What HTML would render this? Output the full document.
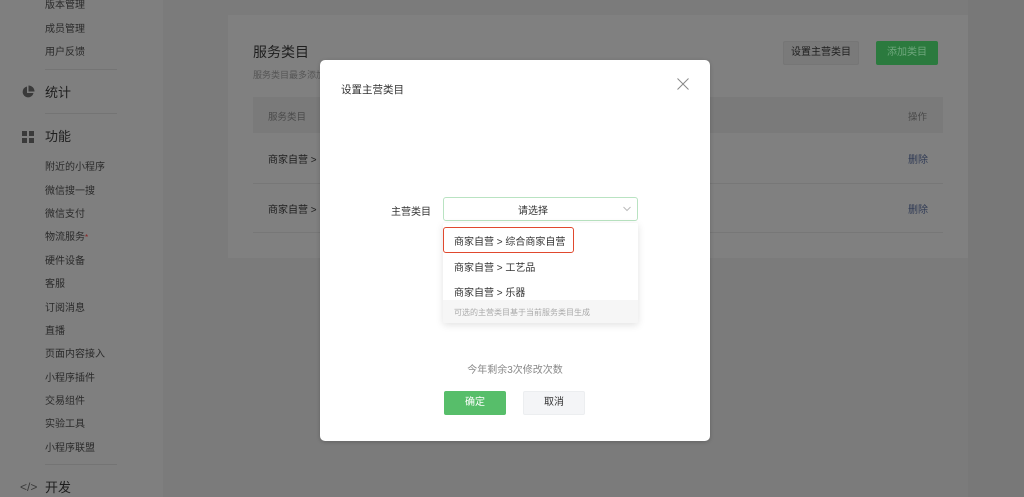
<!DOCTYPE html>
<html><head><meta charset="utf-8"><style>
*{margin:0;padding:0;box-sizing:border-box}
body{width:1024px;height:497px;overflow:hidden;position:relative;background:#7b7b7b;font-family:"Liberation Sans","Noto Sans CJK SC",sans-serif}
.a{position:absolute;white-space:nowrap}
.sb{left:0;top:0;width:163px;height:497px;background:#7f7f7f}
.si{left:45px;font-size:10px;color:#2a2a2a;line-height:12px}
.hr{height:1px;background:#747474;left:45px;width:72px}
.big{left:45px;font-size:13px;color:#1e1e1e;line-height:16px}
</style></head><body>
<div class="a sb"></div>
<div class="a si" style="top:0">版本管理</div>
<div class="a si" style="top:24px">成员管理</div>
<div class="a si" style="top:47px">用户反馈</div>
<div class="a hr" style="top:69px"></div>
<svg class="a" style="left:21px;top:85px" width="14" height="14" viewBox="0 0 14 14"><path d="M6 1.5A5.5 5.5 0 1 0 12.5 8H6Z" fill="#3a3a3a"/><path d="M7.5 0.5V6.5H13.5A6 6 0 0 0 7.5 0.5Z" fill="#3a3a3a"/></svg>
<div class="a big" style="top:85px">统计</div>
<div class="a hr" style="top:113px"></div>
<svg class="a" style="left:22px;top:131px" width="12" height="12"><rect x="0" y="0" width="5" height="5" fill="#3a3a3a"/><rect x="7" y="0" width="5" height="5" fill="#3a3a3a"/><rect x="0" y="7" width="5" height="5" fill="#3a3a3a"/><rect x="7" y="7" width="5" height="5" fill="#3a3a3a"/></svg>
<div class="a big" style="top:129px">功能</div>
<div class="a si" style="top:162px">附近的小程序</div>
<div class="a si" style="top:186px">微信搜一搜</div>
<div class="a si" style="top:209px">微信支付</div>
<div class="a si" style="top:232px">物流服务<span style="color:#8a1e1e;font-size:8px;vertical-align:top">*</span></div>
<div class="a si" style="top:256px">硬件设备</div>
<div class="a si" style="top:279px">客服</div>
<div class="a si" style="top:303px">订阅消息</div>
<div class="a si" style="top:326px">直播</div>
<div class="a si" style="top:349px">页面内容接入</div>
<div class="a si" style="top:373px">小程序插件</div>
<div class="a si" style="top:396px">交易组件</div>
<div class="a si" style="top:419px">实验工具</div>
<div class="a si" style="top:443px">小程序联盟</div>
<div class="a hr" style="top:464px"></div>
<div class="a" style="left:20px;top:480px;font-size:12px;color:#3a3a3a">&lt;/&gt;</div>
<div class="a big" style="top:480px">开发</div>

<div class="a" style="left:968px;top:0;width:56px;height:497px;background:#787878"></div>
<div class="a" style="left:228px;top:15px;width:740px;height:243px;background:#808080"></div>
<div class="a" style="left:253px;top:42px;font-size:14px;color:#1e1e1e">服务类目</div>
<div class="a" style="left:253px;top:68px;font-size:9px;color:#555">服务类目最多添加</div>
<div class="a" style="left:253px;top:97px;width:690px;height:36px;background:#7a7a7a"></div>
<div class="a" style="left:268px;top:109px;font-size:9.5px;color:#4a4a4a">服务类目</div>
<div class="a" style="left:908px;top:109px;font-size:9.5px;color:#4a4a4a">操作</div>
<div class="a" style="left:268px;top:151px;font-size:10px;color:#1e1e1e">商家自营 &gt;</div>
<div class="a" style="left:908px;top:151px;font-size:10px;color:#2f3a55">删除</div>
<div class="a" style="left:253px;top:183px;width:690px;height:1px;background:#777"></div>
<div class="a" style="left:268px;top:201px;font-size:10px;color:#1e1e1e">商家自营 &gt;</div>
<div class="a" style="left:908px;top:201px;font-size:10px;color:#2f3a55">删除</div>
<div class="a" style="left:253px;top:232px;width:690px;height:1px;background:#777"></div>
<div class="a" style="left:783px;top:41px;width:76px;height:24px;background:#7a7a7a;border:1px solid #767676;border-radius:2px;font-size:10px;color:#1e1e1e;text-align:center;line-height:22px">设置主营类目</div>
<div class="a" style="left:876px;top:41px;width:62px;height:24px;background:#2b7a3e;border-radius:2px;font-size:10px;color:#6fa77d;text-align:center;line-height:24px">添加类目</div>

<div class="a" style="left:320px;top:60px;width:390px;height:381px;background:#fff;border-radius:5px;box-shadow:0 1px 4px rgba(0,0,0,.2)"></div>
<div class="a" style="left:341px;top:82px;font-size:10.5px;color:#333">设置主营类目</div>
<svg class="a" style="left:677px;top:78px" width="12" height="12"><path d="M0.5 0.5L11.5 11.5M11.5 0.5L0.5 11.5" stroke="#888" stroke-width="1"/></svg>
<div class="a" style="left:391px;top:203px;font-size:10px;color:#333">主营类目</div>
<div class="a" style="left:443px;top:197px;width:195px;height:24px;border:1px solid #b9e3c2;border-radius:3px;background:#fff"></div>
<div class="a" style="left:443px;top:202px;width:180px;text-align:center;font-size:10px;color:#333">请选择</div>
<svg class="a" style="left:623px;top:206px" width="8" height="6"><path d="M0.5 1L4 4.5L7.5 1" stroke="#bbb" fill="none"/></svg>
<div class="a" style="left:443px;top:223px;width:195px;height:100px;background:#fff;box-shadow:0 2px 8px rgba(0,0,0,.12);border-radius:2px;overflow:hidden">
<div style="position:absolute;left:0;top:77px;width:195px;height:23px;background:#f6f6f6"></div>
<div style="position:absolute;left:11px;top:84px;font-size:8px;color:#aaa">可选的主营类目基于当前服务类目生成</div>
</div>
<div class="a" style="left:443px;top:227px;width:131px;height:26px;border:1.5px solid #e0492e;border-radius:3px"></div>
<div class="a" style="left:454px;top:233px;font-size:10px;color:#333">商家自营 &gt; 综合商家自营</div>
<div class="a" style="left:454px;top:259px;font-size:10px;color:#333">商家自营 &gt; 工艺品</div>
<div class="a" style="left:454px;top:284px;font-size:10px;color:#333">商家自营 &gt; 乐器</div>
<div class="a" style="left:320px;top:361px;width:390px;text-align:center;font-size:10px;color:#888">今年剩余3次修改次数</div>
<div class="a" style="left:444px;top:391px;width:62px;height:24px;background:#57be6a;border-radius:2px;font-size:10px;color:#fff;text-align:center;line-height:24px">确定</div>
<div class="a" style="left:523px;top:391px;width:62px;height:24px;background:#f4f5f7;border:1px solid #eceef0;border-radius:2px;font-size:10px;color:#333;text-align:center;line-height:22px">取消</div>
</body></html>
